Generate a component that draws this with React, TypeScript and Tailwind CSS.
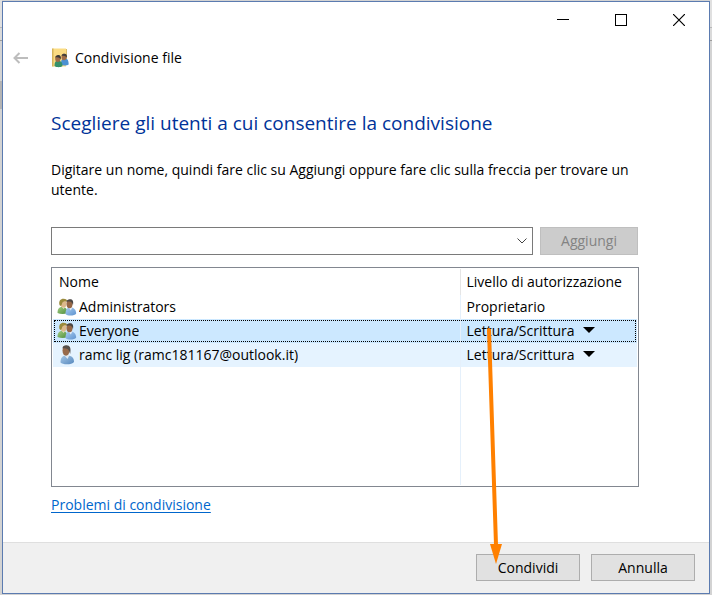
import { useState } from 'react';

type IconName = 'group' | 'user';

interface Entry {
  name: string;
  icon: IconName;
  level: string;
  owner?: boolean;
}

const entries: Entry[] = [
  { name: 'Administrators', icon: 'group', level: 'Proprietario', owner: true },
  { name: 'Everyone', icon: 'group', level: 'Lettura/Scrittura' },
  {
    name: 'ramc lig (ramc181167@outlook.it)',
    icon: 'user',
    level: 'Lettura/Scrittura',
  },
];

function GroupIcon() {
  return (
    <svg width="20" height="18" viewBox="0 0 20 18" className="shrink-0">
      <defs>
        <linearGradient id="groupGreen" x1="0" y1="0" x2="1" y2="1">
          <stop offset="0" stopColor="#a3cf86" />
          <stop offset="1" stopColor="#4f8d3c" />
        </linearGradient>
        <linearGradient id="groupBlue" x1="0" y1="0" x2="1" y2="1">
          <stop offset="0" stopColor="#a9cdf0" />
          <stop offset="1" stopColor="#5f93cf" />
        </linearGradient>
      </defs>
      <path d="M.5 15C.5 11 2 9 5.500 8.500c3 .5 5 2.500 5 6.500-3 1.300-7 1.300-10 0Z" fill="url(#groupGreen)" />
      <path d="M4 8l2.500 3L9 8Z" fill="#e9dfc4" />
      <ellipse cx="6.500" cy="5.500" rx="3" ry="4" fill="#dcb98c" />
      <path d="M2.500 7C1.500 3 3.500.8 6.500.8c2.500 0 3.800 1.200 3.800 3C8 2.800 6 3.500 5.200 5c-.4 1.500-.7 2.500-1.700 3Z" fill="#9a8a3c" />
      <path d="M8.500 16c0-4.500 1.500-6.500 5-6.800 3.500.3 5.700 2.800 5.700 6.300-1.500 2.500-8.700 2.700-10.700.5Z" fill="url(#groupBlue)" />
      <path d="M11.500 9.300l2.200 3.200 2-3.200Z" fill="#e4edf6" />
      <ellipse cx="12.500" cy="6" rx="3" ry="4.200" fill="#966747" />
      <path d="M9.500 4C9.500 2 11 1.200 13 1.200c2.700 0 3.700 1.800 3 6-.5-1.500-1-2.800-2-3.300C13 3.400 11 3.500 9.500 4Z" fill="#4b4745" />
    </svg>
  );
}

function UserIcon() {
  return (
    <svg width="20" height="20" viewBox="0 0 20 20" className="shrink-0">
      <defs>
        <linearGradient id="userBlue" x1="0" y1="0" x2="1" y2="1">
          <stop offset="0" stopColor="#a6c8e8" />
          <stop offset="1" stopColor="#5788bd" />
        </linearGradient>
      </defs>
      <path d="M3.500 17.500c0-5 2-7 6.500-7.300 5 .3 7 2.800 7 6.800-2 3-11.500 3-13.500.5Z" fill="url(#userBlue)" />
      <path d="M7 10l3.500 4 2-4Z" fill="#dfe9f2" />
      <ellipse cx="9" cy="5.800" rx="3.500" ry="5" fill="#976a4b" />
      <path d="M5.500 3.500C5.500 1.500 7 .3 9.500.3c3.500 0 4.700 2.700 3.700 8.700-.7-2-1.500-4.500-2.600-5C8.500 3.200 7 3 5.500 3.500Z" fill="#55504c" />
    </svg>
  );
}

function SharedFolderIcon() {
  return (
    <svg width="17" height="20" viewBox="0 0 17 20" className="shrink-0">
      <path d="M.5.500h13.500v18H.5Z" fill="#fbdc83" />
      <path d="M0 .5h1.500v18H0Z" fill="#d6b45b" />
      <path d="M14 1h1v10h-1Z" fill="#d9bd6c" />
      <path d="M9 16c0-4 1-5.500 3.500-5.700 3 .2 4.200 2 4.200 6.200-2 1.500-5.700 1.500-7.700-.5Z" fill="#4c91d2" />
      <ellipse cx="12" cy="9" rx="2.500" ry="3.200" fill="#a06d48" />
      <path d="M9.500 7.800C9.800 6.300 11 5.800 12.500 5.800c2 0 2.800 1.500 2.300 4C14 8 12 7.300 9.500 7.800Z" fill="#44403c" />
      <path d="M2.500 18c0-3.800 1-5.300 3.500-5.500 3 .2 4.600 2 4.600 5.500-2 1.600-6.100 1.600-8.100 0Z" fill="#37916a" />
      <ellipse cx="5.800" cy="10.800" rx="2.600" ry="3.300" fill="#a06d48" />
      <path d="M3.200 9.500C3.400 8 4.800 7 6.300 7c2.200 0 3.100 1.800 2.400 4.500C7.800 9.500 6 9 3.200 9.500Z" fill="#3b3936" />
    </svg>
  );
}

function TitleBar() {
  return (
    <div className="flex h-9 justify-end pr-px">
      <button aria-label="Riduci a icona" className="flex w-[58px] items-center justify-center">
        <svg width="12" height="12" shapeRendering="crispEdges">
          <path d="M0 5h12v1H0Z" />
        </svg>
      </button>
      <button aria-label="Ingrandisci" className="flex w-[58px] items-center justify-center">
        <svg width="12" height="12" shapeRendering="crispEdges">
          <rect x=".5" y=".5" width="11" height="11" fill="none" stroke="#000" />
        </svg>
      </button>
      <button aria-label="Chiudi" className="flex w-[58px] items-center justify-center">
        <svg width="12" height="12">
          <path d="M0 0l12 12M12 0L0 12" stroke="#000" strokeWidth="1.200" />
        </svg>
      </button>
    </div>
  );
}

// edges of the window that lies behind the dialog
function BackdropEdge({ withSelection }: { withSelection?: boolean }) {
  return (
    <div className="flex w-[2px] shrink-0 flex-col bg-[#d3d3d3]">
      <div className="h-7 border-b border-[#b8b8b8] bg-[#e0e0e0]" />
      <div className="h-[13px] border-b border-[#9c9c9c] bg-[#dadada]" />
      {withSelection && <div className="mt-10 h-7 bg-[#b4b4b4]" />}
    </div>
  );
}

function LevelSelect({ name, level }: { name: string; level: string }) {
  return (
    <div className="relative w-32">
      <select
        aria-label={`Livello di autorizzazione di ${name}`}
        defaultValue={level}
        className="block h-6 w-full appearance-none bg-transparent p-0 leading-6 outline-none"
      >
        <option>Lettura</option>
        <option>Lettura/Scrittura</option>
        <option>Rimuovi</option>
      </select>
      <svg
        width="12"
        height="6"
        className="pointer-events-none absolute right-0 top-2"
      >
        <path d="M0 0h12L6 6Z" />
      </svg>
    </div>
  );
}

export default function App() {
  const [user, setUser] = useState('');
  const [selected, setSelected] = useState('Everyone');

  return (
    <div className="flex min-h-screen bg-[#d3d3d3] font-['Open_Sans','Noto_Sans',sans-serif] text-sm text-black">
      <BackdropEdge withSelection />
      <div className="relative my-px flex min-w-0 flex-1 flex-col border border-[#5b7bb0] bg-white">
        <TitleBar />
        <header className="flex h-10 items-center">
          <button aria-label="Indietro" className="ml-[10px] mr-6 text-[#bdbdbd]">
            <svg width="15" height="12" fill="none" stroke="currentColor" strokeWidth="2">
              <path d="M15 6H1.500M6.500 1l-5 5 5 5" />
            </svg>
          </button>
          <SharedFolderIcon />
          <span className="ml-[6px]">Condivisione file</span>
        </header>

        <main className="flex flex-1 flex-col items-start pb-[27px] pl-12 pr-[70px] pt-[31px]">
          <h1 className="text-[19px] leading-7 text-[#003399]">
            Scegliere gli utenti a cui consentire la condivisione
          </h1>
          <p className="mt-[23px] leading-5">
            Digitare un nome, quindi fare clic su Aggiungi oppure fare clic
            sulla freccia per trovare un utente.
          </p>

          <div className="mt-[27px] flex w-full items-end gap-[7px] pr-px">
            <div className="flex h-7 flex-1 border border-[#7a7a7a] bg-white">
              <input
                type="text"
                aria-label="Nome utente"
                value={user}
                onChange={(e) => setUser(e.target.value)}
                className="min-w-0 flex-1 px-1 outline-none"
              />
              <button aria-label="Mostra utenti" className="flex w-5 items-center justify-center">
                <svg width="10" height="6" fill="none" stroke="#444">
                  <path d="M.5.500L5 5 9.500.5" />
                </svg>
              </button>
            </div>
            <button
              disabled={!user}
              className="h-7 w-[98px] border border-[#bfbfbf] bg-[#cccccc] text-[#838383]"
            >
              Aggiungi
            </button>
          </div>

          <div className="mt-3 flex min-h-[220px] w-full flex-1 flex-col border border-[#828790] p-px">
            <table className="w-full table-fixed border-collapse text-left">
              <thead>
                <tr className="h-[26px]">
                  <th className="pl-[6px] font-normal">Nome</th>
                  <th className="w-[177px] border-l border-[#e5e5e5] pl-[6px] font-normal">
                    Livello di autorizzazione
                  </th>
                </tr>
              </thead>
              <tbody>
                {entries.map((entry) => (
                  <tr
                    key={entry.name}
                    onClick={() => setSelected(entry.name)}
                    className={
                      entry.name === selected
                        ? 'h-6 bg-[#cce8ff] outline-1 -outline-offset-2 outline-dotted outline-black'
                        : entry.owner
                          ? 'h-6'
                          : 'h-6 bg-[#e5f3ff]'
                    }
                  >
                    <td className="p-0">
                      <div className="flex h-6 items-center gap-[2px] pl-1">
                        {entry.icon === 'group' ? <GroupIcon /> : <UserIcon />}
                        <span className="truncate">{entry.name}</span>
                      </div>
                    </td>
                    <td className="border-l border-[#e5f0fb] p-0 pl-[6px]">
                      {entry.owner ? (
                        entry.level
                      ) : (
                        <LevelSelect name={entry.name} level={entry.level} />
                      )}
                    </td>
                  </tr>
                ))}
              </tbody>
            </table>
            <div className="flex flex-1 justify-end">
              <div className="w-[177px] border-l border-[#e5f0fb]" />
            </div>
          </div>

          <a href="#problemi" className="mt-2 leading-5 text-[#0066cc] underline underline-offset-2">
            Problemi di condivisione
          </a>
        </main>

        <footer className="flex justify-end gap-[11px] border-t border-[#dfdfdf] bg-[#f0f0f0] pb-3 pl-3 pr-[14px] pt-[11px]">
          <button className="h-[27px] w-[104px] border border-[#adadad] bg-[#e1e1e1]">
            Condividi
          </button>
          <button className="h-[27px] w-[104px] border border-[#adadad] bg-[#e1e1e1]">
            Annulla
          </button>
        </footer>

        <svg
          width="20"
          height="238"
          className="pointer-events-none absolute bottom-[29px] right-[204px]"
        >
          <path d="M4 4L11 219" stroke="#ff8000" strokeWidth="4" strokeLinecap="round" />
          <path d="M5 218h12l-6 20Z" fill="#ff8000" />
        </svg>
      </div>
      <BackdropEdge />
    </div>
  );
}
